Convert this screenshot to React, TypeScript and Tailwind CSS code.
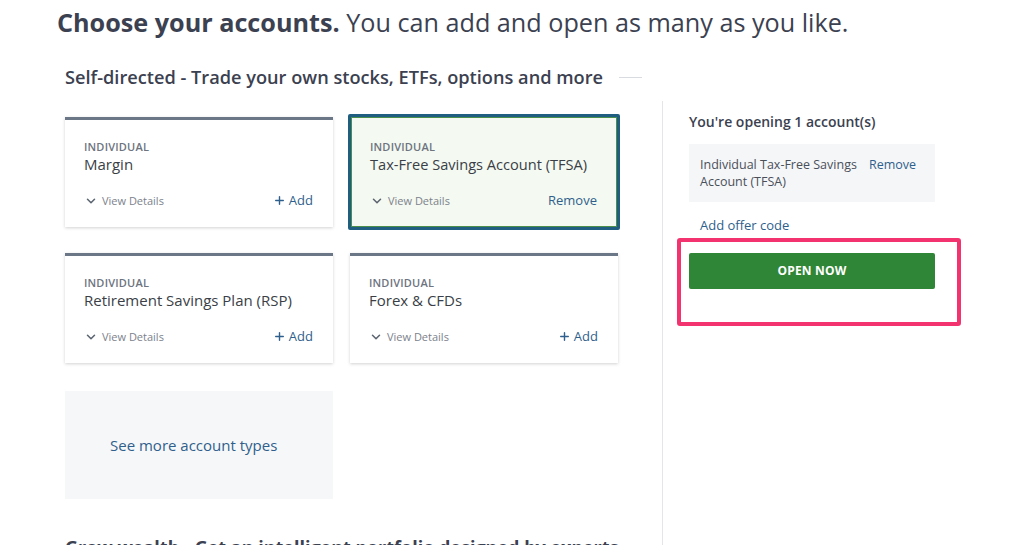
import { ChevronDown, Plus } from 'lucide-react';

type Account = { type: string; name: string; selected?: boolean };

const accounts: Account[] = [
  { type: 'Individual', name: 'Margin' },
  { type: 'Individual', name: 'Tax-Free Savings Account (TFSA)', selected: true },
  { type: 'Individual', name: 'Retirement Savings Plan (RSP)' },
  { type: 'Individual', name: 'Forex & CFDs' },
];

function AccountCard({ account }: { account: Account }) {
  if (account.selected) {
    return (
      <div className="h-[116px] -mx-[2px] -my-[3px] border-[3px] border-[#1f5e80] bg-[#f4f9f1] shadow-[inset_0_0_0_1px_#4b8f4a] rounded-[2px] pl-[19px] pr-[20px] pt-[23px]">
        <div className="text-[11px] font-semibold uppercase tracking-[0.2px] text-[#6d7480] leading-[14px]">{account.type}</div>
        <div className="text-[14.6px] text-[#3a3f47] leading-[20px]">{account.name}</div>
        <div className="flex items-center justify-between mt-[17px]">
          <button className="flex items-center gap-[4px] text-[11px] text-[#7c828c]">
            <ChevronDown size={14} strokeWidth={2.6} className="text-[#5d6570]" />
            View Details
          </button>
          <button className="text-[13px] text-[#2f5f8c]">Remove</button>
        </div>
      </div>
    );
  }
  return (
    <div className="h-[110px] bg-white border-t-[3px] border-[#6b7686] shadow-[0_1px_3px_rgba(0,0,0,0.18)] pl-[19px] pr-[20px] pt-[20px]">
      <div className="text-[11px] font-semibold uppercase tracking-[0.2px] text-[#6d7480] leading-[14px]">{account.type}</div>
      <div className="text-[15px] text-[#3a3f47] leading-[20px]">{account.name}</div>
      <div className="flex items-center justify-between mt-[17px]">
        <button className="flex items-center gap-[4px] text-[11px] text-[#7c828c]">
          <ChevronDown size={14} strokeWidth={2.6} className="text-[#5d6570]" />
          View Details
        </button>
        <button className="flex items-center gap-[3px] text-[13px] text-[#2f5f8c]">
          <Plus size={13} strokeWidth={2.6} />
          Add
        </button>
      </div>
    </div>
  );
}

export default function App() {
  return (
    <div className="h-[545px] overflow-hidden bg-white font-['Open_Sans',sans-serif]">
      <h1 className="pl-[57px] pt-[5px] text-[25.2px] leading-[34px] text-[#3b4150]">
        <span className="font-bold">Choose your accounts.</span> You can add and open as many as you like.
      </h1>

      <div className="flex items-center pl-[65px] mt-[26px]">
        <h2 className="text-[18.2px] font-semibold text-[#3b4150] leading-[24px]">
          Self-directed - Trade your own stocks, ETFs, options and more
        </h2>
        <div className="ml-[16px] w-[23px] h-px bg-[#d8dbe0]" />
      </div>

      <div className="flex mt-[12px]">
        <div className="pl-[65px] w-[620px] shrink-0 pt-[16px]">
          <div className="grid grid-cols-[268px_268px] gap-x-[17px] gap-y-[26px]">
            {accounts.map((a) => (
              <AccountCard key={a.name} account={a} />
            ))}
            <div className="h-[108px] bg-[#f6f7f9] flex items-center pl-[45px] mt-[2px]">
              <a className="text-[15px] text-[#2f5f8c]">See more account types</a>
            </div>
          </div>
          <h2 className="mt-[35px] text-[18px] font-bold text-[#3b4150] leading-[26px] whitespace-nowrap">
            Grow wealth - Get an intelligent portfolio designed by experts
          </h2>
        </div>

        <div className="ml-[42px] w-px self-stretch h-[460px] bg-[#e3e5e9]" />

        <div className="pl-[26px] pt-[11px] w-[272px]">
          <div className="text-[14px] font-semibold text-[#3b4150] leading-[20px]">You're opening 1 account(s)</div>
          <div className="mt-[12px] bg-[#f5f6f8] px-[11px] py-[12px] flex items-start gap-[9px]">
            <div className="text-[12.5px] text-[#4a505a] leading-[17px] w-[160px]">Individual Tax-Free Savings Account (TFSA)</div>
            <button className="text-[12.5px] text-[#2f5f8c] leading-[17px]">Remove</button>
          </div>
          <a className="block mt-[14px] pl-[11px] text-[13px] text-[#2f5f8c] leading-[18px]">Add offer code</a>
          <div className="relative mt-[6px]">
            <div className="absolute -left-[12px] -top-[2px] w-[284px] h-[88px] border-[4px] border-[#f2336f] rounded-[3px]" />
            <button className="relative mt-[13px] w-[246px] h-[36px] bg-[#2e8636] rounded-[2px] text-white text-[12px] font-bold tracking-[0.2px]">
              OPEN NOW
            </button>
          </div>
        </div>
      </div>
    </div>
  );
}
